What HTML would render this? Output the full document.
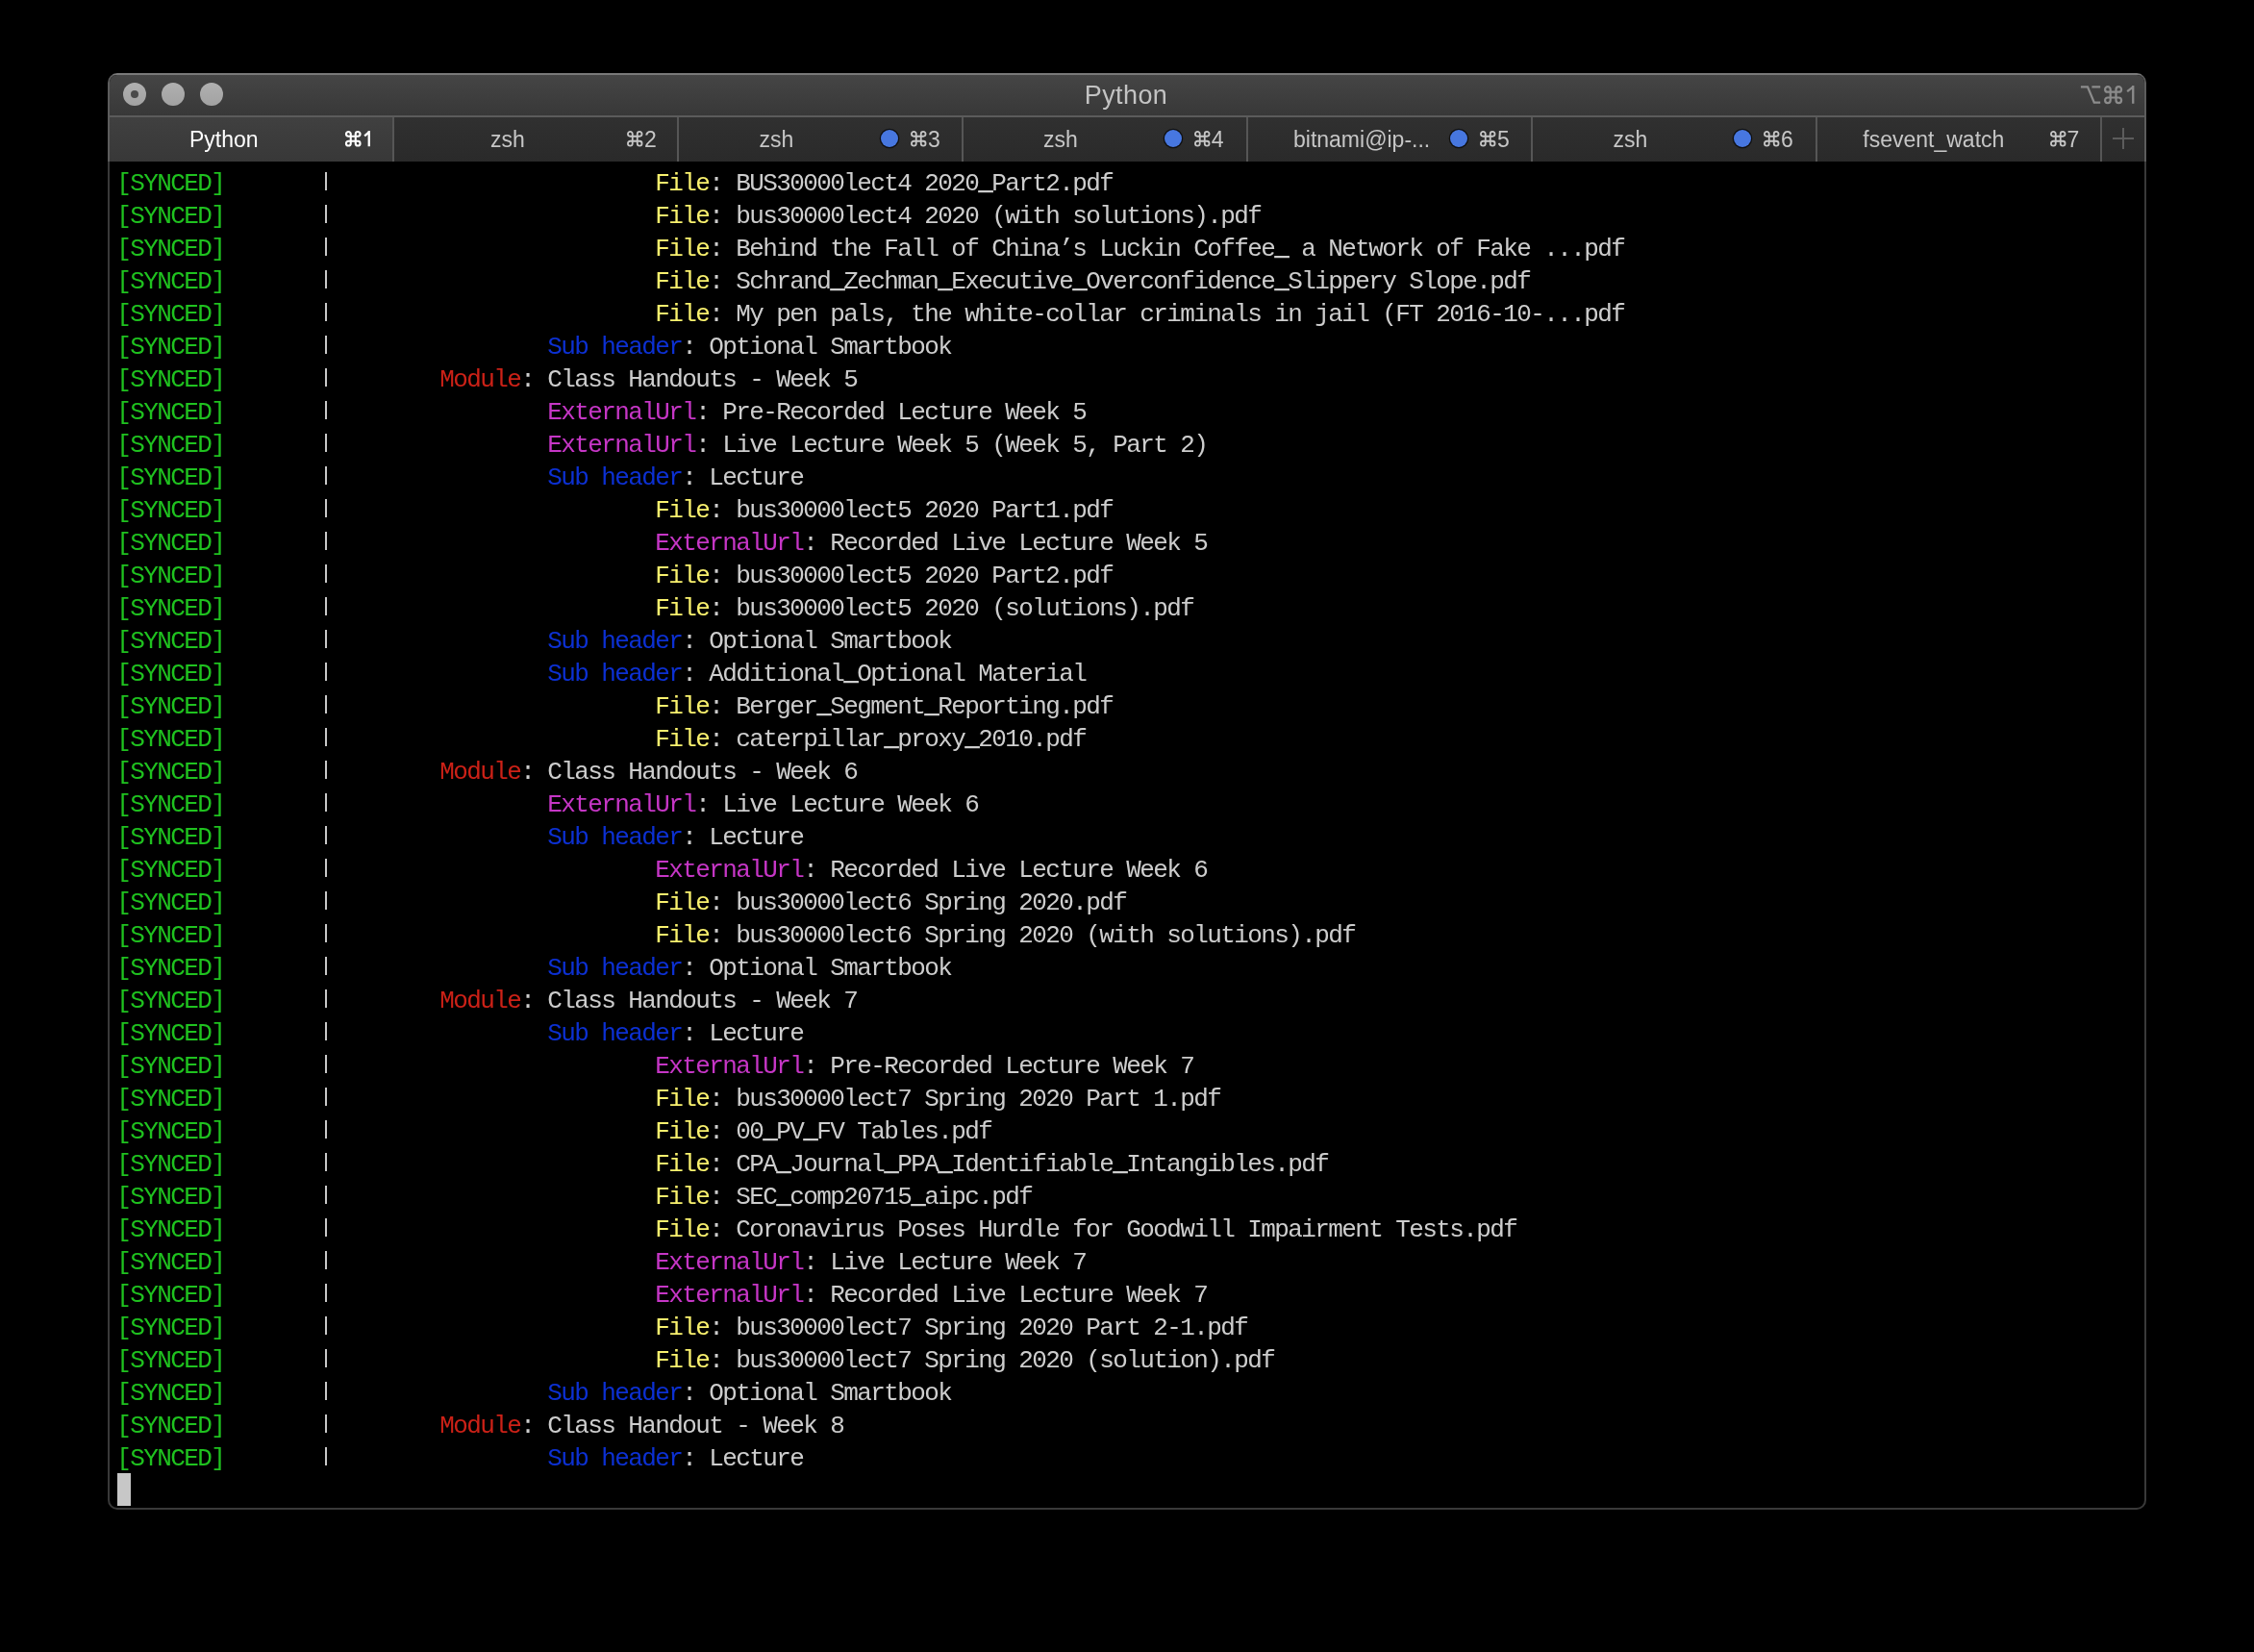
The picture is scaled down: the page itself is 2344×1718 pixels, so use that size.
<!DOCTYPE html>
<html><head><meta charset="utf-8"><style>
html,body{-webkit-font-smoothing:antialiased;margin:0;padding:0;background:#000;width:2344px;height:1718px;overflow:hidden;position:relative}
.win{position:absolute;left:112px;top:76px;width:2120px;height:1494px;border-radius:10px;
 background:linear-gradient(to bottom,#7a7a7a 0,#7a7a7a 2px,#5c5c5c 2px,#5c5c5c 92px,#393939 92px)}
.inner{position:absolute;left:2px;top:2px;right:2px;bottom:2px;border-radius:8px;background:#000;overflow:hidden}
.wrap{will-change:transform;position:absolute;left:-114px;top:-78px;width:2344px;height:1718px}
.titlebar{position:absolute;left:112px;top:78px;width:2120px;height:42px;background:linear-gradient(#454545,#383838)}
.hsep{position:absolute;left:112px;top:120px;width:2120px;height:2px;background:#5b5b5b}
.tabbar{position:absolute;left:112px;top:122px;width:2120px;height:46px;background:linear-gradient(#303030,#2a2a2a)}
.acttab{position:absolute;left:112px;top:122px;width:296px;height:46px;background:linear-gradient(#404040,#383838)}
.vs{position:absolute;top:122px;width:2px;height:46px;background:#565656}
.tl{position:absolute;top:86px;width:24px;height:24px;border-radius:50%;background:linear-gradient(#b0b0b0,#a2a2a2)}
.tl i{position:absolute;left:8px;top:8px;width:8px;height:8px;border-radius:50%;background:#4a4a4a}
.title{position:absolute;left:0;width:2344px;top:84px;text-align:center;font:27px/30px "Liberation Sans",sans-serif;color:#c3c3c3;letter-spacing:0.4px;margin-left:-1px}
.tt{position:absolute;top:130px;font:23px/30px "Liberation Sans",sans-serif;white-space:pre}
.ic{position:absolute;overflow:visible}
.dot{position:absolute;top:135.2px;width:18px;height:18px;border-radius:50%;background:#4777e0;box-shadow:0 0 0 1.3px #101010}
.term{position:absolute;left:121.2px;top:174px;margin:0;font-family:"Liberation Mono";font-size:26px;line-height:34px;letter-spacing:-1.6026px;color:#cdcdcd;white-space:pre}
.g{color:#1fc21f} .y{color:#f9f16e} .b{color:#0c30d2} .r{color:#cc2117} .m{color:#c636c6}
.pp{position:absolute;left:337.6px;width:2px;height:19px;background:#c8c8c8}
.tt2{position:absolute;top:84px;font:27px/30px "Liberation Sans",sans-serif;color:#8c8c8c}
.pl{position:absolute;background:#5c5c5c}
.u{position:relative;top:-2px;text-shadow:0 0.7px 0 currentColor}
.cur{position:absolute;left:122px;top:1532px;width:14px;height:34px;background:#c7c7c7}
</style></head><body>
<div class="win"><div class="inner"><div class="wrap">
<div class="titlebar"></div>
<div class="hsep"></div>
<div class="tabbar"></div>
<div class="acttab"></div>
<div class="vs" style="left:408px"></div><div class="vs" style="left:704px"></div><div class="vs" style="left:1000px"></div><div class="vs" style="left:1296px"></div><div class="vs" style="left:1592px"></div><div class="vs" style="left:1888px"></div><div class="vs" style="left:2184px"></div>
<div class="tl" style="left:128px"><i></i></div>
<div class="tl" style="left:168px"></div>
<div class="tl" style="left:208px"></div>
<div class="title">Python</div>
<svg class="ic" style="left:2163px;top:88px" width="22" height="21" viewBox="0 0 22 21"><path d="M0.9 2.4H8.0L14.8 18.7H21.2M12.4 2.4H21.2" fill="none" stroke="#8c8c8c" stroke-width="2.3"/></svg><svg class="ic" style="left:2188.2px;top:89.2px" width="19.2" height="19.2" viewBox="0 0 16.5 16.5"><path d="M5.75 5.75L5.75 3.35A2.4 2.4 0 1 0 3.35 5.75L13.15 5.75A2.4 2.4 0 1 0 10.75 3.35L10.75 13.15A2.4 2.4 0 1 0 13.15 10.75L3.35 10.75A2.4 2.4 0 1 0 5.75 13.15Z" fill="none" stroke="#8c8c8c" stroke-width="1.9" stroke-linejoin="miter"/></svg><svg class="ic" style="left:2211px;top:89.2px" width="8.4" height="18.7" viewBox="0 0 8.4 18.7"><path d="M7.25 0V18.7M7.25 1.38L1.15 6.17" fill="none" stroke="#8c8c8c" stroke-width="2.3"/></svg>
<div class="tt" style="left:197px;color:#ffffff">Python</div><svg class="ic" style="left:358.8px;top:135.6px" width="16.5" height="16.5" viewBox="0 0 16.5 16.5"><path d="M5.75 5.75L5.75 3.35A2.4 2.4 0 1 0 3.35 5.75L13.15 5.75A2.4 2.4 0 1 0 10.75 3.35L10.75 13.15A2.4 2.4 0 1 0 13.15 10.75L3.35 10.75A2.4 2.4 0 1 0 5.75 13.15Z" fill="none" stroke="#ffffff" stroke-width="2.1" stroke-linejoin="miter"/></svg><svg class="ic" style="left:378.2px;top:135.8px" width="6.9" height="16.2" viewBox="0 0 6.9 16.2"><path d="M5.75 0V16.2M5.75 1.38L1.15 5.35" fill="none" stroke="#ffffff" stroke-width="2.3"/></svg><div class="tt" style="left:510px;color:#c6c6c6">zsh</div><svg class="ic" style="left:652px;top:135.6px" width="16.5" height="16.5" viewBox="0 0 16.5 16.5"><path d="M5.75 5.75L5.75 3.35A2.4 2.4 0 1 0 3.35 5.75L13.15 5.75A2.4 2.4 0 1 0 10.75 3.35L10.75 13.15A2.4 2.4 0 1 0 13.15 10.75L3.35 10.75A2.4 2.4 0 1 0 5.75 13.15Z" fill="none" stroke="#c6c6c6" stroke-width="1.8" stroke-linejoin="miter"/></svg><div class="tt" style="left:670px;color:#c6c6c6">2</div><div class="tt" style="left:789.5px;color:#c6c6c6">zsh</div><svg class="ic" style="left:947px;top:135.6px" width="16.5" height="16.5" viewBox="0 0 16.5 16.5"><path d="M5.75 5.75L5.75 3.35A2.4 2.4 0 1 0 3.35 5.75L13.15 5.75A2.4 2.4 0 1 0 10.75 3.35L10.75 13.15A2.4 2.4 0 1 0 13.15 10.75L3.35 10.75A2.4 2.4 0 1 0 5.75 13.15Z" fill="none" stroke="#c6c6c6" stroke-width="1.8" stroke-linejoin="miter"/></svg><div class="tt" style="left:965px;color:#c6c6c6">3</div><div class="dot" style="left:916px"></div><div class="tt" style="left:1085px;color:#c6c6c6">zsh</div><svg class="ic" style="left:1241.7px;top:135.6px" width="16.5" height="16.5" viewBox="0 0 16.5 16.5"><path d="M5.75 5.75L5.75 3.35A2.4 2.4 0 1 0 3.35 5.75L13.15 5.75A2.4 2.4 0 1 0 10.75 3.35L10.75 13.15A2.4 2.4 0 1 0 13.15 10.75L3.35 10.75A2.4 2.4 0 1 0 5.75 13.15Z" fill="none" stroke="#c6c6c6" stroke-width="1.8" stroke-linejoin="miter"/></svg><div class="tt" style="left:1259.7px;color:#c6c6c6">4</div><div class="dot" style="left:1210.7px"></div><div class="tt" style="left:1345px;color:#c6c6c6">bitnami@ip-...</div><svg class="ic" style="left:1539px;top:135.6px" width="16.5" height="16.5" viewBox="0 0 16.5 16.5"><path d="M5.75 5.75L5.75 3.35A2.4 2.4 0 1 0 3.35 5.75L13.15 5.75A2.4 2.4 0 1 0 10.75 3.35L10.75 13.15A2.4 2.4 0 1 0 13.15 10.75L3.35 10.75A2.4 2.4 0 1 0 5.75 13.15Z" fill="none" stroke="#c6c6c6" stroke-width="1.8" stroke-linejoin="miter"/></svg><div class="tt" style="left:1557px;color:#c6c6c6">5</div><div class="dot" style="left:1508px"></div><div class="tt" style="left:1677.6px;color:#c6c6c6">zsh</div><svg class="ic" style="left:1834px;top:135.6px" width="16.5" height="16.5" viewBox="0 0 16.5 16.5"><path d="M5.75 5.75L5.75 3.35A2.4 2.4 0 1 0 3.35 5.75L13.15 5.75A2.4 2.4 0 1 0 10.75 3.35L10.75 13.15A2.4 2.4 0 1 0 13.15 10.75L3.35 10.75A2.4 2.4 0 1 0 5.75 13.15Z" fill="none" stroke="#c6c6c6" stroke-width="1.8" stroke-linejoin="miter"/></svg><div class="tt" style="left:1852px;color:#c6c6c6">6</div><div class="dot" style="left:1803px"></div><div class="tt" style="left:1937.3px;color:#c6c6c6">fsevent_watch</div><svg class="ic" style="left:2131.6px;top:135.6px" width="16.5" height="16.5" viewBox="0 0 16.5 16.5"><path d="M5.75 5.75L5.75 3.35A2.4 2.4 0 1 0 3.35 5.75L13.15 5.75A2.4 2.4 0 1 0 10.75 3.35L10.75 13.15A2.4 2.4 0 1 0 13.15 10.75L3.35 10.75A2.4 2.4 0 1 0 5.75 13.15Z" fill="none" stroke="#c6c6c6" stroke-width="1.8" stroke-linejoin="miter"/></svg><div class="tt" style="left:2149.6px;color:#c6c6c6">7</div>
<div class="pl" style="left:2197px;top:143px;width:22px;height:2px"></div><div class="pl" style="left:2207px;top:133px;width:2px;height:22px"></div>
<pre class="term"><span class="g">[SYNCED]</span>                                <span class="y">File</span>: BUS30000lect4 2020<span class="u">_</span>Part2.pdf
<span class="g">[SYNCED]</span>                                <span class="y">File</span>: bus30000lect4 2020 (with solutions).pdf
<span class="g">[SYNCED]</span>                                <span class="y">File</span>: Behind the Fall of China’s Luckin Coffee<span class="u">_</span> a Network of Fake ...pdf
<span class="g">[SYNCED]</span>                                <span class="y">File</span>: Schrand<span class="u">_</span>Zechman<span class="u">_</span>Executive<span class="u">_</span>Overconfidence<span class="u">_</span>Slippery Slope.pdf
<span class="g">[SYNCED]</span>                                <span class="y">File</span>: My pen pals, the white-collar criminals in jail (FT 2016-10-...pdf
<span class="g">[SYNCED]</span>                        <span class="b">Sub header</span>: Optional Smartbook
<span class="g">[SYNCED]</span>                <span class="r">Module</span>: Class Handouts - Week 5
<span class="g">[SYNCED]</span>                        <span class="m">ExternalUrl</span>: Pre-Recorded Lecture Week 5
<span class="g">[SYNCED]</span>                        <span class="m">ExternalUrl</span>: Live Lecture Week 5 (Week 5, Part 2)
<span class="g">[SYNCED]</span>                        <span class="b">Sub header</span>: Lecture
<span class="g">[SYNCED]</span>                                <span class="y">File</span>: bus30000lect5 2020 Part1.pdf
<span class="g">[SYNCED]</span>                                <span class="m">ExternalUrl</span>: Recorded Live Lecture Week 5
<span class="g">[SYNCED]</span>                                <span class="y">File</span>: bus30000lect5 2020 Part2.pdf
<span class="g">[SYNCED]</span>                                <span class="y">File</span>: bus30000lect5 2020 (solutions).pdf
<span class="g">[SYNCED]</span>                        <span class="b">Sub header</span>: Optional Smartbook
<span class="g">[SYNCED]</span>                        <span class="b">Sub header</span>: Additional<span class="u">_</span>Optional Material
<span class="g">[SYNCED]</span>                                <span class="y">File</span>: Berger<span class="u">_</span>Segment<span class="u">_</span>Reporting.pdf
<span class="g">[SYNCED]</span>                                <span class="y">File</span>: caterpillar<span class="u">_</span>proxy<span class="u">_</span>2010.pdf
<span class="g">[SYNCED]</span>                <span class="r">Module</span>: Class Handouts - Week 6
<span class="g">[SYNCED]</span>                        <span class="m">ExternalUrl</span>: Live Lecture Week 6
<span class="g">[SYNCED]</span>                        <span class="b">Sub header</span>: Lecture
<span class="g">[SYNCED]</span>                                <span class="m">ExternalUrl</span>: Recorded Live Lecture Week 6
<span class="g">[SYNCED]</span>                                <span class="y">File</span>: bus30000lect6 Spring 2020.pdf
<span class="g">[SYNCED]</span>                                <span class="y">File</span>: bus30000lect6 Spring 2020 (with solutions).pdf
<span class="g">[SYNCED]</span>                        <span class="b">Sub header</span>: Optional Smartbook
<span class="g">[SYNCED]</span>                <span class="r">Module</span>: Class Handouts - Week 7
<span class="g">[SYNCED]</span>                        <span class="b">Sub header</span>: Lecture
<span class="g">[SYNCED]</span>                                <span class="m">ExternalUrl</span>: Pre-Recorded Lecture Week 7
<span class="g">[SYNCED]</span>                                <span class="y">File</span>: bus30000lect7 Spring 2020 Part 1.pdf
<span class="g">[SYNCED]</span>                                <span class="y">File</span>: 00<span class="u">_</span>PV<span class="u">_</span>FV Tables.pdf
<span class="g">[SYNCED]</span>                                <span class="y">File</span>: CPA<span class="u">_</span>Journal<span class="u">_</span>PPA<span class="u">_</span>Identifiable<span class="u">_</span>Intangibles.pdf
<span class="g">[SYNCED]</span>                                <span class="y">File</span>: SEC<span class="u">_</span>comp20715<span class="u">_</span>aipc.pdf
<span class="g">[SYNCED]</span>                                <span class="y">File</span>: Coronavirus Poses Hurdle for Goodwill Impairment Tests.pdf
<span class="g">[SYNCED]</span>                                <span class="m">ExternalUrl</span>: Live Lecture Week 7
<span class="g">[SYNCED]</span>                                <span class="m">ExternalUrl</span>: Recorded Live Lecture Week 7
<span class="g">[SYNCED]</span>                                <span class="y">File</span>: bus30000lect7 Spring 2020 Part 2-1.pdf
<span class="g">[SYNCED]</span>                                <span class="y">File</span>: bus30000lect7 Spring 2020 (solution).pdf
<span class="g">[SYNCED]</span>                        <span class="b">Sub header</span>: Optional Smartbook
<span class="g">[SYNCED]</span>                <span class="r">Module</span>: Class Handout - Week 8
<span class="g">[SYNCED]</span>                        <span class="b">Sub header</span>: Lecture</pre>
<div class="pp" style="top:179px"></div><div class="pp" style="top:213px"></div><div class="pp" style="top:247px"></div><div class="pp" style="top:281px"></div><div class="pp" style="top:315px"></div><div class="pp" style="top:349px"></div><div class="pp" style="top:383px"></div><div class="pp" style="top:417px"></div><div class="pp" style="top:451px"></div><div class="pp" style="top:485px"></div><div class="pp" style="top:519px"></div><div class="pp" style="top:553px"></div><div class="pp" style="top:587px"></div><div class="pp" style="top:621px"></div><div class="pp" style="top:655px"></div><div class="pp" style="top:689px"></div><div class="pp" style="top:723px"></div><div class="pp" style="top:757px"></div><div class="pp" style="top:791px"></div><div class="pp" style="top:825px"></div><div class="pp" style="top:859px"></div><div class="pp" style="top:893px"></div><div class="pp" style="top:927px"></div><div class="pp" style="top:961px"></div><div class="pp" style="top:995px"></div><div class="pp" style="top:1029px"></div><div class="pp" style="top:1063px"></div><div class="pp" style="top:1097px"></div><div class="pp" style="top:1131px"></div><div class="pp" style="top:1165px"></div><div class="pp" style="top:1199px"></div><div class="pp" style="top:1233px"></div><div class="pp" style="top:1267px"></div><div class="pp" style="top:1301px"></div><div class="pp" style="top:1335px"></div><div class="pp" style="top:1369px"></div><div class="pp" style="top:1403px"></div><div class="pp" style="top:1437px"></div><div class="pp" style="top:1471px"></div><div class="pp" style="top:1505px"></div>
<div class="cur"></div>
</div></div></div>
</body></html>
